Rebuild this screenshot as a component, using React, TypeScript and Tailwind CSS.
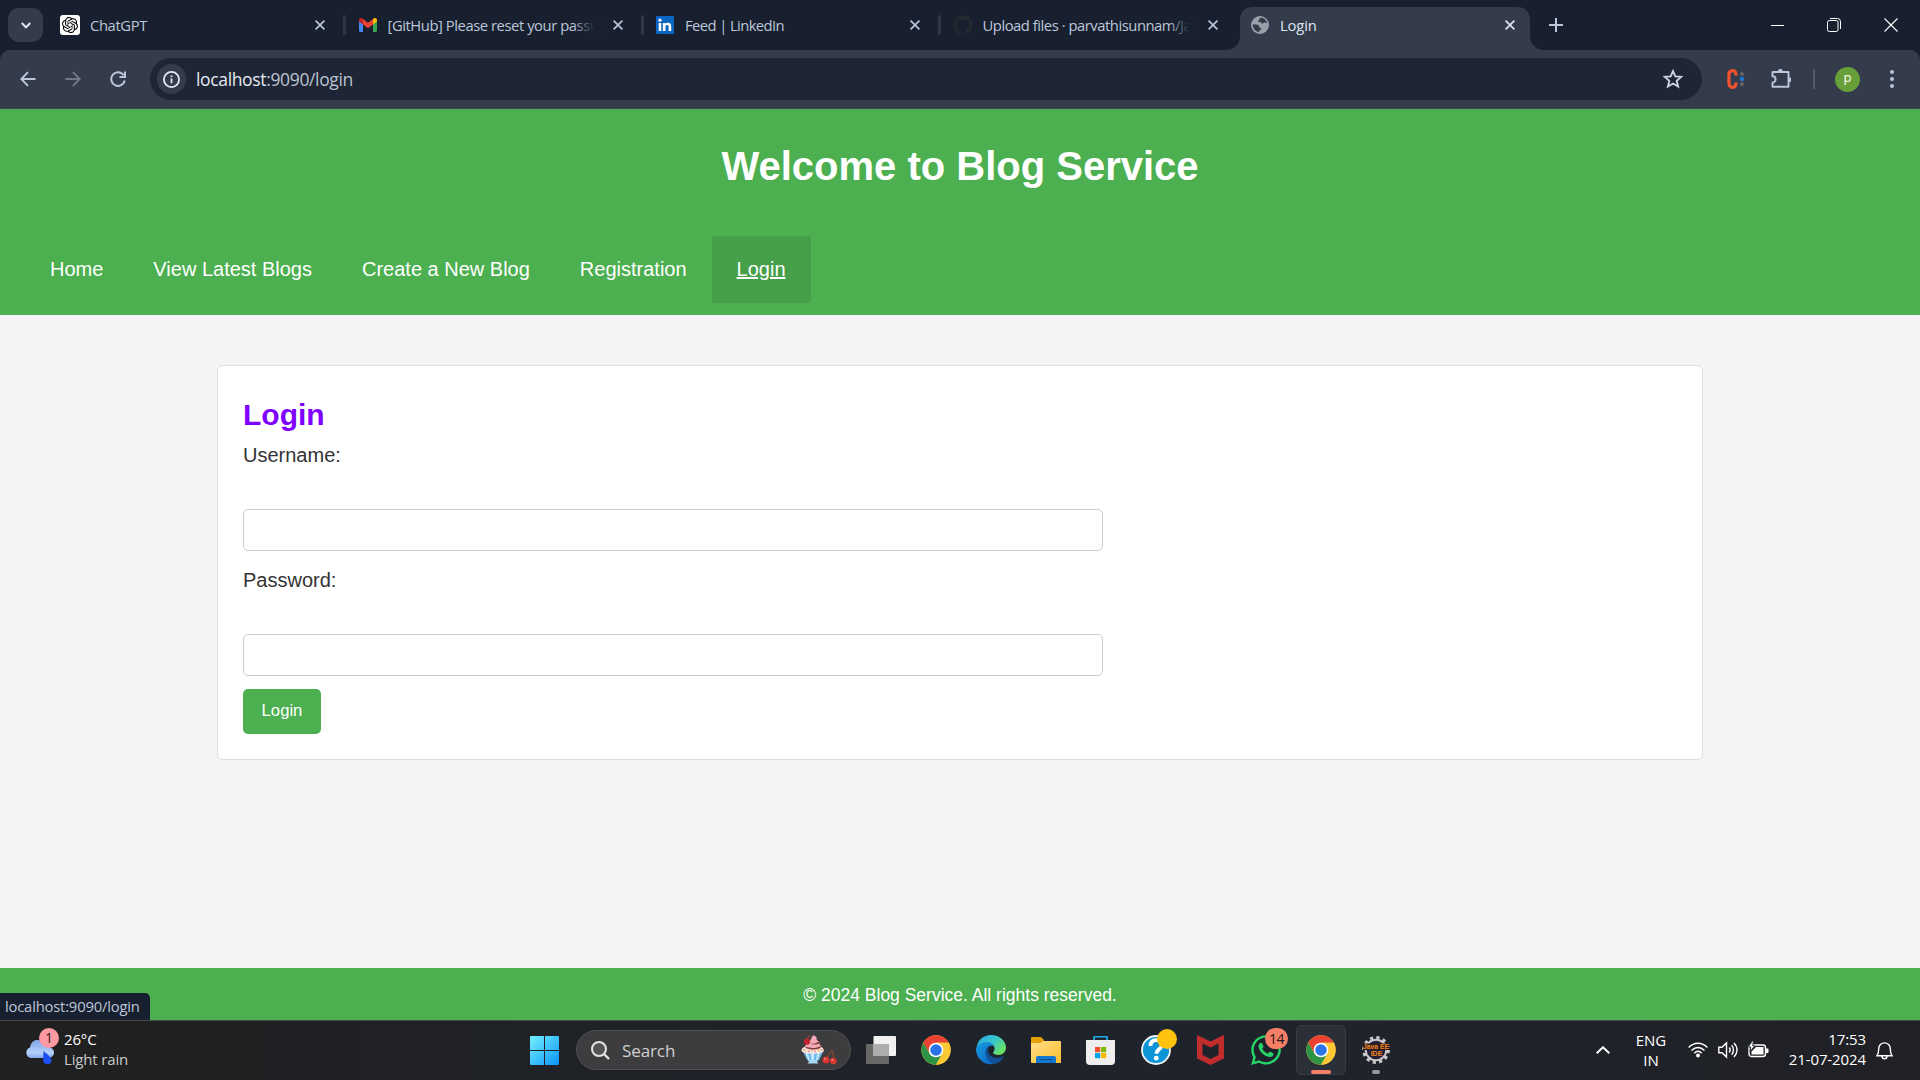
import React from "react";
import { SiOpenai } from "react-icons/si";
import { FaGithub, FaWhatsapp } from "react-icons/fa";

const Cross = ({ className = "" }: { className?: string }) => (
  <svg viewBox="0 0 10 10" className={"h-[10px] w-[10px] shrink-0 " + className} fill="none" stroke="currentColor" strokeWidth="1.7">
    <path d="M.6.6l8.8 8.8M9.4.6L.6 9.4" />
  </svg>
);

const Gmail = () => (
  <svg viewBox="0 0 18 14" className="h-[14px] w-[18px]">
    <path fill="#4285f4" d="M0 3v9.8C0 13.5.5 14 1.2 14H4V6z" />
    <path fill="#34a853" d="M18 3v9.8c0 .7-.5 1.200-1.200 1.200H14V6z" />
    <path fill="#c5221f" d="M0 3.600V2C0 .2 2-.6 3.400.4L4 .9v5.700z" />
    <path fill="#fbbc04" d="M18 3.600V2C18 .2 16-.6 14.600.4L14 .9v5.700z" />
    <path fill="#ea4335" d="M4 .9l5 3.800L14 .9v5.700l-5 3.700-5-3.700z" />
  </svg>
);

const LinkedIn = () => (
  <svg viewBox="0 0 18 18" className="h-[18px] w-[18px]">
    <rect width="18" height="18" rx="1" fill="#0a66c2" />
    <g fill="#fff">
      <circle cx="4" cy="4.200" r="1.600" />
      <path d="M2.700 6.900h2.600V15H2.700zM6.900 6.900h2.500V8c.5-.8 1.400-1.300 2.500-1.300 2.500 0 3.300 1.600 3.300 4V15h-2.600v-3.900c0-1.200-.3-2.100-1.400-2.100-1.200 0-1.700.9-1.700 2.100V15H6.900z" />
    </g>
  </svg>
);

const Globe = () => (
  <svg viewBox="0 0 18 18" className="h-[18px] w-[18px]">
    <circle cx="9" cy="9" r="9" fill="#9aa0a9" />
    <path fill="#343c4c" d="M10.200 1.800c-1 .2-2 .8-2 1.900 0 .9-1.100.6-1.100 1.600 0 .9 1.200.7 2.100.8 1.200.1.900 1.600 2.200 1.600.9 0 .9-1.100 1.800-1.100.8 0 1.400.6 2.900.5C15.500 4.400 13.300 2.200 10.200 1.800zM1.800 8.300c.7 0 2.100.2 3.600.1 1.700 0 2.700.8 2.700 2.300 0 1.200 1.500.8 2.100 1.400.7.8-.2 1.300-1 1.800-.9.500-1 1.400-1 2.200C4.400 15.600 1.700 12.600 1.800 8.300z" />
  </svg>
);

const Chrome = () => (
  <svg viewBox="0 0 48 48" className="h-[30px] w-[30px]">
    <circle cx="24" cy="24" r="23.500" fill="#fcc934" />
    <path fill="#ea4335" d="M3.600 12.300A23.500 23.500 0 0 1 44.400 12.500H24L14 30z" />
    <path fill="#2d9446" d="M3.600 12.300A23.500 23.500 0 0 0 24 47.500L34 30 24 35.500 14 30z" />
    <path fill="#fcc934" d="M44.400 12.500A23.500 23.500 0 0 1 24 47.500L34.200 29.800 24 12.500z" />
    <circle cx="24" cy="24" r="11.700" fill="#fff" />
    <circle cx="24" cy="24" r="9.200" fill="#2b74e8" />
  </svg>
);

const Edge = () => (
  <svg viewBox="0 0 30 30" className="h-[30px] w-[30px]">
    <defs>
      <linearGradient id="edgeTop" x1="0" y1="0" x2="1" y2=".6">
        <stop offset="0" stopColor="#27a8e4" />
        <stop offset=".55" stopColor="#36c6cf" />
        <stop offset="1" stopColor="#6be062" />
      </linearGradient>
      <linearGradient id="edgeLeft" x1="0" y1="0" x2=".8" y2="1">
        <stop offset="0" stopColor="#1b9de2" />
        <stop offset="1" stopColor="#0868c4" />
      </linearGradient>
    </defs>
    <path fill="url(#edgeTop)" d="M.5 13C1.500 5 7.500 0 15 0c8.600 0 15 6 15 12.500 0 4.500-3.300 7.500-7.500 7.500-3.300 0-5.500-1-5.500-2.200 0-.9 1.600-1.500 1.600-4C18.600 10 14.500 8 10.500 8 6 8 2.500 10 .5 13z" />
    <path fill="url(#edgeLeft)" d="M0 15c0-4 4.500-8 10.500-8 3.800 0 6.500 1.700 7.500 4-5-1.500-8 2-8 6 0 6 4.500 10 9 11.700A15 15 0 0 1 0 15z" />
    <path fill="#124f97" d="M12.500 11.500C10 13 9 16 9.500 19c.8 5 5 9.500 10 9.800 3.500-1.300 6.300-3.500 8-6.800.2-.6-.2-.8-.8-.5-7.200 3.500-14.700-.500-14.700-6.500 0-1.500.2-2.500.5-3.500z" />
  </svg>
);

const Cupcake = () => (
  <svg viewBox="0 0 36 30" className="h-[30px] w-[36px]">
    <path fill="#69b5e8" d="M2 17h20l-4 8.500H6.500z" />
    <path fill="#c4e8fc" d="M4.500 18H7l2 8H7.500zM9.500 18h4l-.6 8h-2.300zM16 18h3l-2.800 8H15z" />
    <path fill="#a5d8f6" d="M9 25h6l2.500 3.500h-11z" />
    <path fill="#fbe3dc" d="M.5 15.500C1 12 4 12 5 11.500h14c2 .5 3.500 1.500 4 4-1 2.500-4 2-5 3-2-1-4 1-6 0s-4 .5-6 0-5-1-5.500-3z" />
    <path fill="#f4a9b8" d="M4 13c-.5-4 3-4 4-5.500C10 5 10 3 12 .5c3 0 4.500 2.500 3.500 4.500 3 1 3.500 3 3 4.500 2 1 2 3 .5 4.500-4 1.500-11 1.500-15-1z" />
    <path fill="#7a3f2c" d="M9 8.300c3 1 6 .2 8.600-1.800.8.800 1 1.500.6 2.100-3 1.400-6.500 1.200-9.200-.3zM5 11.500c4 2 10 2 14.500-.3l.2 1.500c-4.500 2-10.500 2-15 0z" />
    <circle cx="6" cy="6.700" r="3.100" fill="#c9222f" />
    <path d="M6 4C7 2 8 1 9.500.6M31 15c-2 3-4 6-5.500 8.500M31 15c1 3 1.400 6 1.600 8.500" fill="none" stroke="#8a4a34" strokeWidth="1.100" />
    <g fill="#e5bf52"><circle cx="4" cy="15.500" r=".9" /><circle cx="18" cy="15.500" r=".9" /></g>
    <g fill="#e0697a"><circle cx="8" cy="16.300" r=".8" /><circle cx="14" cy="16.300" r=".8" /><circle cx="21" cy="14.800" r=".8" /></g>
    <g fill="#6fae6a"><circle cx="11" cy="15.500" r=".7" /><circle cx="2.500" cy="14.500" r=".6" /></g>
    <circle cx="25" cy="25" r="3.500" fill="#d8352f" />
    <circle cx="32.300" cy="26" r="3.300" fill="#d8352f" />
    <circle cx="24" cy="24" r="1" fill="#f08a85" />
    <circle cx="31.300" cy="25" r="1" fill="#f08a85" />
  </svg>
);

const Gear = () => (
  <svg viewBox="0 0 30 30" className="h-[30px] w-[30px]">
    <circle cx="15" cy="15" r="12.300" fill="none" stroke="#c9c9cb" strokeWidth="3.200" strokeDasharray="3.220 3.220" />
    <circle cx="15" cy="15" r="10.300" fill="#252036" stroke="#c9c9cb" strokeWidth="2" />
    <path fill="#2a1c22" d="M2 8.500h26v6.500H2z" />
    <text x="2" y="14" fontFamily="Liberation Sans" fontWeight="700" fontSize="7" textLength="26" lengthAdjust="spacingAndGlyphs" fill="#f5861a">Java EE</text>
    <text x="15.500" y="20.800" textAnchor="middle" fontFamily="Liberation Sans" fontWeight="700" fontSize="7" fill="#f5861a">IDE</text>
  </svg>
);

function Tab({ icon, title, tracking = "", fade = false, sep = true }: { icon: React.ReactNode; title: string; tracking?: string; fade?: boolean; sep?: boolean }) {
  return (
    <div className="flex h-[50px] w-[297.500px] shrink-0 items-center">
      <div className="flex w-[20px] justify-center">{icon}</div>
      <div className={"relative ml-[10px] w-[213px] whitespace-nowrap text-[14.800px] leading-[22px] " + tracking}>
        {title}
        {fade && <div className="absolute inset-y-0 -right-[8px] w-[36px] bg-gradient-to-r from-transparent to-[#18202f] to-60%" />}
      </div>
      <Cross className="ml-[12px]" />
      {sep && <div className="ml-[18px] h-5 w-[3px] rounded bg-[#2f3747]" />}
    </div>
  );
}

function BrowserChrome() {
  return (
    <div className="h-[109px] bg-[#18202f] font-['Open_Sans',sans-serif] text-[#bcc6da]">
      <div className="flex h-[50px]">
        <div className="mt-2 ml-2 mr-[17px] flex h-[34px] w-[35px] shrink-0 items-center justify-center rounded-[11px] bg-[#343c4c]">
          <svg viewBox="0 0 10 7" className="h-[7px] w-[10px]" fill="none" stroke="#dfe4ee" strokeWidth="2"><path d="M.7 1l4.300 4.300L9.300 1" /></svg>
        </div>
        <Tab icon={<span className="flex h-5 w-5 items-center justify-center rounded-[3px] bg-white"><SiOpenai className="text-[16px] text-black" /></span>} title="ChatGPT" tracking="tracking-[-0.4px]" />
        <Tab icon={<Gmail />} title="[GitHub] Please reset your passw" tracking="tracking-[-0.45px]" fade />
        <Tab icon={<LinkedIn />} title="Feed | LinkedIn" tracking="tracking-[-0.6px]" />
        <Tab icon={<FaGithub className="text-[20px] text-[#24292f]" />} title="Upload files · parvathisunnam/Ja" tracking="tracking-[-0.47px]" fade sep={false} />
        <div className="relative -ml-[10px] mt-[7px] flex h-[43px] w-[290px] shrink-0 items-center rounded-t-[12px] bg-[#343c4c] pb-[7px] pl-[11px] text-[#dfe4ee]">
          <svg viewBox="0 0 14 14" className="absolute bottom-0 -left-[14px] h-[14px] w-[14px]"><path fill="#343c4c" d="M14 0v14H0C8 14 14 8 14 0z" /></svg>
          <svg viewBox="0 0 14 14" className="absolute bottom-0 -right-[14px] h-[14px] w-[14px]"><path fill="#343c4c" d="M0 0v14h14C6 14 0 8 0 0z" /></svg>
          <Globe />
          <span className="ml-[11px] w-[225px] text-[14.800px] leading-[22px] tracking-[-0.15px]">Login</span>
          <Cross />
        </div>
        <svg viewBox="0 0 14 14" className="mt-[18px] ml-[19px] h-[14px] w-[14px]" fill="none" stroke="currentColor" strokeWidth="2"><path d="M7 0v14M0 7h14" /></svg>
        <div className="mt-[18px] mr-[22px] ml-auto flex h-[14px] items-center gap-[43px] text-white">
          <div className="h-px w-[13px] bg-white" />
          <svg viewBox="0 0 14 14" className="h-[14px] w-[14px]" fill="none" stroke="currentColor"><rect x=".5" y="2.500" width="10.500" height="11" rx="1.800" /><path d="M3 .5h7.500a3 3 0 0 1 3 3V11" /></svg>
          <svg viewBox="0 0 14 14" className="h-[14px] w-[14px]" fill="none" stroke="currentColor" strokeWidth="1.100"><path d="M.5.5l13 13M13.500.5l-13 13" /></svg>
        </div>
      </div>
      <div className="flex h-[59px] items-center rounded-t-[10px] border-b border-[#3f4756] bg-[#343c4c]">
        <svg viewBox="0 0 16 16" className="ml-[19.500px] h-4 w-4" fill="none" stroke="currentColor" strokeWidth="1.900"><path d="M15.500 8H1.500M8 1.200L1.300 8 8 14.800" /></svg>
        <svg viewBox="0 0 16 16" className="ml-[29px] h-4 w-4 text-[#717888]" fill="none" stroke="currentColor" strokeWidth="1.900"><path d="M.5 8h14M8 1.200L14.700 8 8 14.800" /></svg>
        <svg viewBox="0 0 16 16" className="ml-[29px] h-4 w-4" fill="none" stroke="currentColor" strokeWidth="2"><path d="M13.600 4.200A6.800 6.800 0 1 0 14.700 9.500M15 .5v5.500H9.500" /></svg>
        <div className="ml-[24.500px] flex h-[42px] w-[1552px] items-center rounded-full bg-[#1e2636] pl-[7px]">
          <div className="flex h-[30px] w-[29px] items-center justify-center rounded-full bg-[#343c4c]">
            <svg viewBox="0 0 18 18" className="h-[17px] w-[17px]" fill="none" stroke="#e4e8f1" strokeWidth="1.900"><circle cx="9" cy="9" r="8" /><path d="M9 8v5M9 4.700v2" /></svg>
          </div>
          <span className="ml-[10px] text-[17.500px] tracking-[-0.35px] text-[#bcc2ce]"><span className="text-[#e6e9f0]">localhost</span>:9090/login</span>
          <svg viewBox="0 0 20 20" className="mr-[19.500px] ml-auto h-5 w-5" fill="none" stroke="#cdd1dc" strokeWidth="1.900"><path d="M10 2l2.300 5.400 5.900.5-4.500 3.900 1.400 5.800L10 14.500l-5.100 3.100 1.400-5.800L1.800 7.900l5.900-.5z" /></svg>
        </div>
        <svg viewBox="0 0 20 20" className="ml-[24px] h-5 w-5">
          <path d="M10 6.500C10 2.700 8.600 1.700 6.700 1.700S2.900 3 2.900 6.500v7c0 3.500 1.700 4.800 3.800 4.800S10 17.300 10 13.500" fill="none" stroke="#f4512c" strokeWidth="3.200" />
          <circle cx="16" cy="5" r="2.100" fill="#646464" /><circle cx="16" cy="15" r="2.100" fill="#646464" /><circle cx="16" cy="10" r="2.200" fill="#1f78d6" />
        </svg>
        <svg viewBox="0 0 20 20" className="ml-[25px] h-5 w-5" fill="none" stroke="currentColor" strokeWidth="1.900" strokeLinejoin="round"><path d="M1.500 3h16v14.800h-16v-4.300a3.100 3.100 0 0 0 0-6.200z" /><path fill="currentColor" stroke="none" d="M6.800 2.500a2.500 2.500 0 0 1 5 0zM18 8.200a2.500 2.500 0 0 1 0 5z" /></svg>
        <div className="ml-[22px] h-5 w-[2px] bg-[#525a6b]" />
        <div className="ml-5 flex h-[25px] w-[25px] items-center justify-center rounded-full bg-[#689f38] pb-[3px] text-[13px] leading-none text-white">p</div>
        <svg viewBox="0 0 6 18" className="ml-[29px] h-[18px] w-[6px]" fill="currentColor"><circle cx="3" cy="2" r="2" /><circle cx="3" cy="9" r="2" /><circle cx="3" cy="16" r="2" /></svg>
      </div>
    </div>
  );
}

function Page() {
  return (
    <div className="relative flex h-[911px] flex-col bg-[#f4f4f4] font-['Liberation_Sans',Arial,sans-serif] text-[#333]">
      <header className="h-[206px] bg-[#4caf50] text-white">
        <h1 className="pt-[34px] text-center text-[40px] leading-[46px] font-bold">Welcome to Blog Service</h1>
        <nav className="mt-[47px] flex pl-[25px] text-[20px]">
          <a className="flex h-[67px] items-center px-[25px] pb-[2px]">Home</a>
          <a className="flex h-[67px] items-center px-[25px] pb-[2px]">View Latest Blogs</a>
          <a className="flex h-[67px] items-center px-[25px] pb-[2px]">Create a New Blog</a>
          <a className="flex h-[67px] items-center px-[25px] pb-[2px]">Registration</a>
          <a className="flex h-[67px] items-center bg-[#46a049] px-[25px] pb-[2px] underline">Login</a>
        </nav>
      </header>
      <main className="mt-[50px] ml-[217px] h-[395px] w-[1486px] rounded-[6px] border border-[#ddd] bg-white px-[25px]">
        <h2 className="mt-[32px] text-[30px] leading-[34px] font-bold text-[#8000ff]">Login</h2>
        <label className="mt-[11px] block text-[20px] leading-[24px]">Username:</label>
        <input className="mt-[42px] block h-[42px] w-[860px] rounded-[5px] border border-[#ccc] bg-white" />
        <label className="mt-[17px] block text-[20px] leading-[24px]">Password:</label>
        <input className="mt-[42px] block h-[42px] w-[860px] rounded-[5px] border border-[#ccc] bg-white" />
        <button className="mt-[13px] block h-[45px] w-[78px] rounded-[5px] bg-[#4caf50] pb-[2px] text-[16.670px] text-white">Login</button>
      </main>
      <footer className="mt-auto flex h-[52px] items-center justify-center bg-[#4caf50] pt-[2px] text-[17.500px] text-white">© 2024 Blog Service. All rights reserved.</footer>
      <div className="absolute bottom-0 left-0 flex h-[27px] w-[150px] items-center rounded-tr-[5px] bg-[#18202f] pl-[5px] font-['Open_Sans',sans-serif] text-[14.800px] tracking-[-0.2px] text-[#bcc6da]">localhost:9090/login</div>
    </div>
  );
}

function TaskItem({ children, className = "" }: { children: React.ReactNode; className?: string }) {
  return <div className={"relative flex h-[50px] w-[50px] shrink-0 items-center justify-center " + className}>{children}</div>;
}

function Taskbar() {
  return (
    <div className="flex h-[60px] items-center border-t border-[#46484b] bg-gradient-to-r from-[#202020] via-[#1e232c] via-60% to-[#202126] pb-[1px] font-['Open_Sans',sans-serif] text-[15px] leading-5 text-white">
      <div className="flex w-[530px] pl-[23px]">
        <div className="relative -mt-[1px] h-[38px] w-[32px]">
          <svg viewBox="0 0 32 38" className="h-[38px] w-[32px]">
            <defs><linearGradient id="cloud" x1="0" y1="0" x2="0" y2="1"><stop offset="0" stopColor="#7ea4e8" /><stop offset=".7" stopColor="#b5d0fa" /><stop offset="1" stopColor="#85aaf0" /></linearGradient></defs>
            <path fill="url(#cloud)" d="M7.500 29A5.500 5.500 0 0 1 7 18.500C8 13 11 10.500 15 11c4 0 7 3 8 7 5-.500 8 2 8 5.500s-3 5.500-6 5.500z" />
            <path fill="#1d50f2" d="M20.500 22c5 4 8.500 7 8.100 10.500a4.500 4.500 0 0 1-8.400-.2c-.2-3 .3-6 .3-10.300z" />
          </svg>
          <span className="absolute -top-[1px] left-[16px] flex h-5 w-5 items-center justify-center rounded-full bg-[#ff99a4] text-[14px] text-[#2b1b1d]">1</span>
        </div>
        <div className="-mt-[1px] mb-[1px] ml-[9px] tracking-[-0.15px]"><div>26°C</div><div className="text-[#c9c9c9]">Light rain</div></div>
      </div>
      <svg viewBox="0 0 29 29" className="h-[29px] w-[29px]">
        <defs><linearGradient id="win" x1="0" y1="0" x2="1" y2="1"><stop offset="0" stopColor="#74f0ff" /><stop offset="1" stopColor="#0a94fb" /></linearGradient></defs>
        <path fill="url(#win)" d="M0 1a1 1 0 0 1 1-1h13v14H0zM15 0h13a1 1 0 0 1 1 1v13H15zM0 15h14v14H1a1 1 0 0 1-1-1zM15 15h14v13a1 1 0 0 1-1 1H15z" />
      </svg>
      <div className="ml-[17px] flex h-[40px] w-[275px] items-center rounded-full border border-[#505052] bg-[#3d3d3f] pl-[14px] text-[17px] text-[#d0d0d0]">
        <svg viewBox="0 0 19 19" className="h-[19px] w-[19px]" fill="none" stroke="#e4e4e4" strokeWidth="2"><circle cx="8" cy="8" r="7" fill="#555557" /><path d="M13 13l5 5" strokeWidth="2.400" /></svg>
        <span className="mt-[1px] ml-[12px] tracking-[-0.1px]">Search</span>
        <div className="mr-[13px] ml-auto"><Cupcake /></div>
      </div>
      <TaskItem className="ml-[5px]">
        <svg viewBox="0 0 30 28" className="h-[28px] w-[30px]"><rect y="8" width="23" height="20" rx="1" fill="#686869" /><rect x="7.500" width="22.500" height="20" rx="1" fill="#f1f1f1" /><path fill="#adadad" d="M7.500 8H23v12H7.500z" /></svg>
      </TaskItem>
      <TaskItem className="ml-[5px]"><Chrome /></TaskItem>
      <TaskItem className="ml-[5px]"><Edge /></TaskItem>
      <TaskItem className="ml-[5px]">
        <svg viewBox="0 0 30 26" className="h-[26px] w-[30px]"><defs><linearGradient id="fold" x1="0" y1="0" x2="1" y2="1"><stop offset="0" stopColor="#ffe08a" /><stop offset="1" stopColor="#fbbd2c" /></linearGradient></defs><path fill="#e3a008" d="M0 1a1 1 0 0 1 1-1h9l3 3v3H0z" /><path fill="url(#fold)" d="M0 6h9.500l3-2H29a1 1 0 0 1 1 1v21H1a1 1 0 0 1-1-1z" /><path fill="#1478cf" d="M5 26v-5a2 2 0 0 1 2-2h16a2 2 0 0 1 2 2v5z" /><path stroke="#0b4f97" strokeLinecap="round" d="M9 22.500h12" /></svg>
      </TaskItem>
      <TaskItem className="ml-[5px] pr-[1px]">
        <svg viewBox="0 0 29 29" className="h-[29px] w-[29px]"><path d="M8 6V1.500a1 1 0 0 1 1-1h11a1 1 0 0 1 1 1V6" fill="none" stroke="#23a9e8" strokeWidth="1.800" /><path fill="#eee" d="M0 4h29v21a4 4 0 0 1-4 4H4a4 4 0 0 1-4-4z" /><path fill="#f25022" d="M9 11h5.200v5.200H9z" /><path fill="#7fba00" d="M15 11h5.200v5.200H15z" /><path fill="#00a4ef" d="M9 17h5.200v5.200H9z" /><path fill="#ffb900" d="M15 17h5.200v5.200H15z" /></svg>
      </TaskItem>
      <TaskItem className="ml-[5px] pr-[1px]">
        <svg viewBox="0 0 30 30" className="h-[30px] w-[30px]"><circle cx="15" cy="15" r="14" fill="#0c96d8" stroke="#f4f4f4" strokeWidth="1.800" /><path d="M9.500 11c0-4 2.500-5.800 5.700-5.800 3.500 0 5.600 2 5.600 4.800 0 4-5.300 4-5.300 8.700" fill="none" stroke="#fff" strokeWidth="3.800" /><circle cx="15.300" cy="23.200" r="2.400" fill="#fff" /></svg>
        <span className="absolute top-[4px] right-[4px] h-5 w-5 rounded-full bg-[#ffc20e]" />
      </TaskItem>
      <TaskItem className="ml-[5px] pr-[1px]">
        <svg viewBox="0 0 27 30" className="h-[30px] w-[27px]"><path fill="#c12c2c" d="M0 0l13.500 6.500L27 0v23.500L13.500 30 0 23.500zM5.500 8.500v11.500l8 4 8-4V8.500l-8 4z" fillRule="evenodd" /></svg>
      </TaskItem>
      <TaskItem className="ml-[5px]">
        <FaWhatsapp className="text-[34px] text-[#25d366]" />
        <span className="absolute top-[3px] right-[3px] flex h-[21px] w-[23px] items-center justify-center rounded-full bg-[#f67f67] text-[14px] tracking-[-0.5px] text-[#231513]">14</span>
      </TaskItem>
      <TaskItem className="ml-[5px] rounded-[5px] border border-[#373b43] bg-[#2b3038]">
        <Chrome />
        <span className="absolute bottom-0 left-[14px] h-[4px] w-5 rounded-full bg-[#f67f67]" />
      </TaskItem>
      <TaskItem className="ml-[5px]"><Gear /><span className="absolute bottom-[1px] left-[21px] h-[4px] w-2 rounded-full bg-[#96989c]" /></TaskItem>
      <svg viewBox="0 0 14 8" className="ml-auto h-2 w-[14px]" fill="none" stroke="currentColor" strokeWidth="1.900"><path d="M.7 7.300L7 1.200l6.300 6.100" /></svg>
      <div className="mb-[1px] ml-[20px] w-[42px] text-center">ENG<br />IN</div>
      <svg viewBox="0 0 20 16" className="ml-[16px] h-4 w-5" fill="none" stroke="currentColor" strokeWidth="1.400"><path d="M.6 5.600c5.500-5.800 13.300-5.800 18.800 0M3.500 8.500c4-4 9-4 13 0M6.300 11.200c2.300-2.300 5.100-2.300 7.400 0" /><circle cx="10" cy="13.500" r="1.900" fill="currentColor" stroke="none" /></svg>
      <svg viewBox="0 0 20 18" className="ml-[10px] h-[18px] w-5" fill="none" stroke="currentColor" strokeWidth="1.400"><path d="M.8 6.300h3.200L8.500 2v14L4 11.700H.8zM11.300 6.500c1 1.500 1 3.500 0 5M13.700 4.300c2.300 2.700 2.300 6.700 0 9.400M16 2c4 4 4 10 0 14" /></svg>
      <svg viewBox="0 0 21 18" className="ml-[10px] h-[18px] w-[21px]"><rect x="1" y="4" width="16.500" height="11.500" rx="2.500" fill="none" stroke="currentColor" strokeWidth="1.400" /><path fill="currentColor" d="M3.500 13.500v-3L8 6h7.500v7.500zM18 7.500h1.500a1 1 0 0 1 1 1V11a1 1 0 0 1-1 1H18z" /><path fill="currentColor" stroke="#20242c" strokeWidth=".8" d="M4.200 0L.5 6h2.300L2 10.500 6.800 4.700H4.500L5.500 0z" /></svg>
      <div className="mb-[2px] ml-[18px] w-[79px] text-right tracking-[-0.1px]">17:53<br />21-07-2024</div>
      <svg viewBox="0 0 17 19" className="mr-[27px] ml-[10px] h-[19px] w-[17px]" fill="none" stroke="currentColor" strokeWidth="1.400"><path d="M1 14.700c1.500-2.200 1.700-4 1.700-7a5.800 5.800 0 0 1 11.600 0c0 3 .2 4.800 1.700 7zM6 15c0 3.800 5 3.800 5 0" /></svg>
    </div>
  );
}

export default function App() {
  return (
    <div className="h-[1080px] w-[1920px] overflow-hidden">
      <BrowserChrome />
      <Page />
      <Taskbar />
    </div>
  );
}
